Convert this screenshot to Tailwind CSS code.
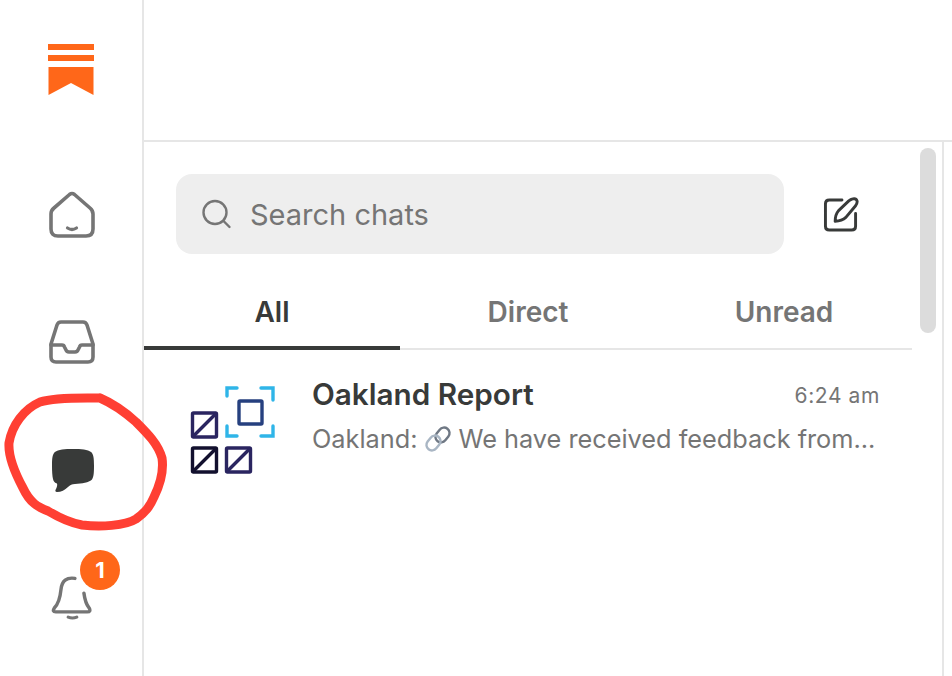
<!DOCTYPE html>
<html lang="en">
<head>
    <meta charset="UTF-8" />
    <title>Chats</title>
    <script src="https://cdn.jsdelivr.net/npm/@tailwindcss/browser@4"></script>
</head>
<body class="bg-white overflow-hidden font-['Inter',sans-serif]">
<div class="relative flex w-[952px] h-[676px]">
    <!-- Sidebar -->
    <aside class="w-[144px] h-full shrink-0 border-r-2 border-[#e6e6e6] flex flex-col items-center">
        <svg class="mt-[44px] w-[46px] h-[52px]" viewBox="0 0 46 52" fill="#ff6719">
            <rect x="0" y="0" width="46" height="6" />
            <rect x="0" y="11" width="46" height="6" />
            <path d="M0.500 23H45.500V51L23 39L0.500 51Z" />
        </svg>
        <svg class="mt-[95px] ml-[2px] w-[46px] h-[47px]" viewBox="0 0 46 47" fill="none" stroke="#757575" stroke-width="3.600" stroke-linecap="round" stroke-linejoin="round">
            <path d="M20.500 3.500Q23 1.500 25.500 3.500L41 17Q44 19.500 44 23V38Q44 45 37 45H9Q2 45 2 38V23Q2 19.500 5 17Z" />
            <path d="M18.500 37Q23 40 27.500 37" stroke-width="3.200" />
        </svg>
        <svg class="mt-[82px] ml-[2px] w-[46px] h-[44px]" viewBox="0 0 46 44" fill="none" stroke="#757575" stroke-width="3.600" stroke-linecap="round" stroke-linejoin="round">
            <path d="M12 2H34Q37 2 38 5L44 24V37Q44 42 39 42H7Q2 42 2 37V24L8 5Q9 2 12 2Z" />
            <path d="M2 25H13Q15 25 15.500 27L16.500 29Q17.500 32 20 32H26Q28.500 32 29.500 29L30.500 27Q31 25 33 25H44" />
        </svg>
        <svg class="mt-[85px] ml-[4px] w-[42px] h-[43px]" viewBox="0 0 42 43" fill="#383a39">
            <path d="M21 0C29 0 36 0.500 39 3C41.500 5 42 9 42 17C42 25 41.500 29 39.500 31C37 33.500 30 34.500 23 35C20 35.200 18 36 16 38C13 41 9 43 5 43C3 43 3 41.500 4 40C5 38 5.500 36 5 34.500C3 34 1.500 32.500 1 30C0.300 27 0 22 0 17C0 9 0.500 5 3 3C6 0.500 13 0 21 0Z" />
        </svg>
        <div class="relative mt-[84px] ml-[2px] w-[44px] h-[44px]">
            <svg class="w-[44px] h-[44px]" viewBox="0 0 44 46" fill="none" stroke="#757575" stroke-width="3.600" stroke-linecap="round" stroke-linejoin="round">
                <path d="M25 2.500Q12 0.500 10.500 14C9.500 24 8 29 3.500 33.500Q1 37.500 5 37.500H38Q42 37.500 40 33.500C37 30 35.500 26 34.500 18" />
                <path d="M18 43Q22.500 45 27 43" stroke-width="3.200" />
            </svg>
            <span class="absolute left-[30px] top-[-26px] w-[40px] h-[40px] rounded-full bg-[#ff6719] text-white text-[22px] font-bold flex items-center justify-center">1</span>
        </div>
    </aside>

    <!-- Chat list -->
    <main class="flex-1 min-w-0 flex flex-col">
        <div class="h-[142px] shrink-0 border-b-2 border-[#e6e6e6]"></div>
        <div class="relative flex-1 flex min-h-0">
            <div class="w-[768px] shrink-0 flex flex-col">
                <div class="flex items-center pt-[32px] pl-[32px]">
                    <div class="w-[608px] h-[80px] rounded-[16px] bg-[#eeeeee] flex items-center pl-[26px] gap-[18px]">
                        <svg class="w-[30px] h-[30px]" viewBox="0 0 30 30" fill="none" stroke="#757575" stroke-width="2.400" stroke-linecap="round">
                            <circle cx="13" cy="13.500" r="11.500" />
                            <path d="M21.500 22L27.500 28" />
                        </svg>
                        <span class="text-[29px] text-[#757575] leading-none">Search chats</span>
                    </div>
                    <svg class="ml-[39px] w-[36px] h-[35px]" viewBox="0 0 36 36" fill="none" stroke="#383a39" stroke-width="3" stroke-linecap="round" stroke-linejoin="round">
                        <path d="M19 3H6Q2 3 2 7V30Q2 34 6 34H29Q33 34 33 30V17" />
                        <path d="M30 2Q33.500 1 34.500 4Q35 6 33 9L23 21Q19 24.500 12 25Q12 18 15.500 14L26 4Q28 2.500 30 2Z" />
                    </svg>
                </div>
                <div class="flex mt-[36px] h-[60px] border-b-2 border-[#e6e6e6]">
                    <div class="relative w-[256px] h-[58px] flex justify-center pt-[2px] text-[28px] leading-[40px] font-semibold text-[#383a39]">All
                        <span class="absolute left-0 right-0 bottom-[-2px] h-[4px] bg-[#383a39]"></span>
                    </div>
                    <div class="w-[256px] flex justify-center pt-[2px] text-[28px] leading-[40px] font-semibold text-[#757575]">Direct</div>
                    <div class="w-[256px] flex justify-center pt-[2px] text-[28px] leading-[40px] font-semibold text-[#757575]">Unread</div>
                </div>
                <div class="flex pt-[34px] pl-[46px]">
                    <svg class="w-[86px] h-[90px] shrink-0" viewBox="0 0 86 90" fill="none" stroke-width="3.400">
                        <g stroke="#2fb5e8" stroke-linecap="round">
                            <path d="M37 12V4H47" />
                            <path d="M71 4H83V16" />
                            <path d="M37 42V52H47" />
                            <path d="M71 52H83V42" />
                        </g>
                        <rect x="49" y="17" width="23" height="23" rx="1" stroke="#26407f" />
                        <g stroke="#2a2560">
                            <rect x="2.500" y="29" width="24" height="24" rx="1" />
                            <path d="M2.500 53L26.500 29" />
                            <rect x="36.500" y="64" width="24" height="24" rx="1" />
                            <path d="M36.500 88L60.500 64" />
                        </g>
                        <g stroke="#12102e">
                            <rect x="2.500" y="64" width="24" height="24" rx="1" />
                            <path d="M2.500 88L26.500 64" />
                        </g>
                    </svg>
                    <div class="ml-[36px] w-[568px]">
                        <div class="flex items-center justify-between h-[32px] mt-[-5px]">
                            <span class="text-[29.700px] font-semibold text-[#383a39] leading-none">Oakland Report</span>
                            <span class="text-[21px] text-[#757575] leading-none tracking-[0.6px]">6:24 am</span>
                        </div>
                        <div class="mt-[14px] flex items-center text-[25.300px] text-[#757575] leading-none whitespace-nowrap">
                            <span>Oakland:</span>
                            <svg class="ml-[6px] mr-[7px] w-[28px] h-[28px]" viewBox="0 0 28 28" fill="none" stroke-linecap="round">
                                <rect x="13" y="2" width="11" height="16" rx="5.500" transform="rotate(38 18.500 10)" stroke="#6f7884" stroke-width="2.400" />
                                <rect x="4" y="10" width="11" height="16" rx="5.500" transform="rotate(38 9.500 18)" stroke="#a9b6c4" stroke-width="2.400" />
                            </svg>
                            <span>We have received feedback from...</span>
                        </div>
                    </div>
                </div>
            </div>
            <div class="absolute left-[776px] top-[6px] w-[16px] h-[185px] rounded-full bg-[#dcdcdc]"></div>
            <div class="absolute left-[798px] top-0 bottom-0 w-[2px] bg-[#e6e6e6]"></div>
        </div>
    </main>

    <!-- Hand drawn annotation -->
    <svg class="absolute left-0 top-0 pointer-events-none" width="952" height="676" fill="none" stroke="#ff3f33" stroke-width="9" stroke-linecap="round" stroke-linejoin="round">
        <path d="M100 398C82 398 55 397 40 402C24 409 12 425 9 443C8 458 16 475 23 488C30 503 38 507 48 511C58 517 70 523 82 525C100 527 125 526 136 519C146 512 150 506 154 497C160 485 164 472 162 458C158 444 148 434 136 422C126 413 114 404 100 398" />
    </svg>
</div>
</body>
</html>
